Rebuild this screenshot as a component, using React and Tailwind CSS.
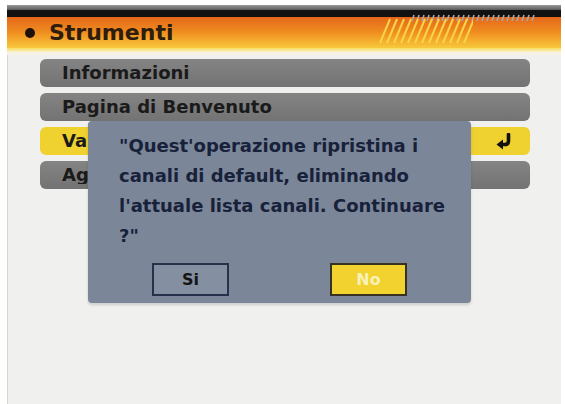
import React from 'react';

const font = { fontFamily: '"DejaVu Sans", "Liberation Sans", sans-serif' };

// rows partly hidden by the dialog clip their label at the dialog's edge
const MenuRow = ({ label, active, clip }) => (
  <div
    className={`h-[28px] w-[490px] rounded-[6px] flex items-center justify-between pl-[22px] pr-[17px] ${
      active ? 'bg-[#efd12f]' : 'bg-gradient-to-b from-[#848484] to-[#737373]'
    }`}
  >
    <span
      className={`text-[18px] font-bold text-[#1a1a1a] leading-none whitespace-nowrap ${
        clip ? 'w-[26px] overflow-hidden' : ''
      }`}
    >
      {label}
    </span>
    {active && (
      <svg width="18" height="17" viewBox="0 0 18 17">
        <path d="M13.5 1.5 V8 Q13.5 11.5 10 11.5 H7" fill="none" stroke="#111" strokeWidth="3.6" strokeLinecap="round" />
        <polygon points="1.5,11.5 8,6.5 8,16.5" fill="#111" />
      </svg>
    )}
  </div>
);

const App = () => {
  return (
    <div className="relative w-[565px] h-[404px] bg-white pl-[7px] pr-[4px] pt-[5px] flex flex-col" style={font}>
      {/* Header */}
      <div className="relative">
        <div className="h-[5px] bg-gradient-to-b from-[#9a9a9a] to-[#5a5a5a]" />
        <div className="h-[7px] bg-[#111]" />
        <div className="h-[31px] bg-gradient-to-b from-[#e4661a] via-[#f08e1f] to-[#f7c83c] flex items-center pl-[18px] gap-[14px]">
          <div className="w-[10px] h-[10px] rounded-full bg-[#1d1208]" />
          <span className="text-[22px] font-bold text-[#2e1c0c] leading-none">Strumenti</span>
        </div>
        <div className="h-[4px] bg-gradient-to-b from-[#f8dc5a] to-[#fbf1c4]" />
        <div className="h-[3px] bg-[#f6f3e6]" />
        {/* decorative stripes */}
        <svg className="absolute left-[403px] top-[9px]" width="125" height="8" viewBox="0 0 125 8">
          {Array.from({ length: 25 }).map((_, i) => (
            <line key={i} x1={i * 5 + 2} y1="7" x2={i * 5 + 4} y2="1" stroke="#a8a8a8" strokeWidth="1.6" />
          ))}
        </svg>
        <svg className="absolute left-[371px] top-[13px]" width="95" height="26" viewBox="0 0 95 26">
          {Array.from({ length: 13 }).map((_, i) => (
            <line key={i} x1={i * 7 + 2} y1="25" x2={i * 7 + 12} y2="1" stroke="#f7d546" strokeWidth="2" />
          ))}
        </svg>
      </div>

      {/* Panel */}
      <div className="flex-1 bg-[#f0f0ee] border-l border-[#d6d6d6] pt-[4px] pl-[32px] flex flex-col gap-[6px]">
        <MenuRow label="Informazioni" />
        <MenuRow label="Pagina di Benvenuto" />
        <MenuRow label="Valori di fabbrica" active clip />
        <MenuRow label="Aggiornamento software" clip />
      </div>

      {/* Dialog */}
      <div className="absolute left-[88px] top-[121px] w-[383px] h-[182px] rounded-[4px] bg-[#7b8699] shadow-[0_2px_3px_rgba(0,0,0,0.15)] flex flex-col">
        <p className="pl-[31px] pt-[10px] text-[18px] font-bold leading-[30px] text-[#18213a] whitespace-nowrap">
          "Quest'operazione ripristina i
          <br />
          canali di default, eliminando
          <br />
          l'attuale lista canali. Continuare
          <br />
          ?"
        </p>
        <div className="mt-[12px] flex justify-center gap-[101px]">
          <div className="w-[77px] h-[33px] border-2 border-[#27314a] bg-[#848fa1] flex items-center justify-center">
            <span className="text-[16px] font-bold text-[#151515]">Si</span>
          </div>
          <div className="w-[77px] h-[33px] border-2 border-[#35321f] bg-[#f1d22e] flex items-center justify-center">
            <span className="text-[16px] font-bold text-[#f8f1b8]">No</span>
          </div>
        </div>
      </div>
    </div>
  );
};

export default App;
